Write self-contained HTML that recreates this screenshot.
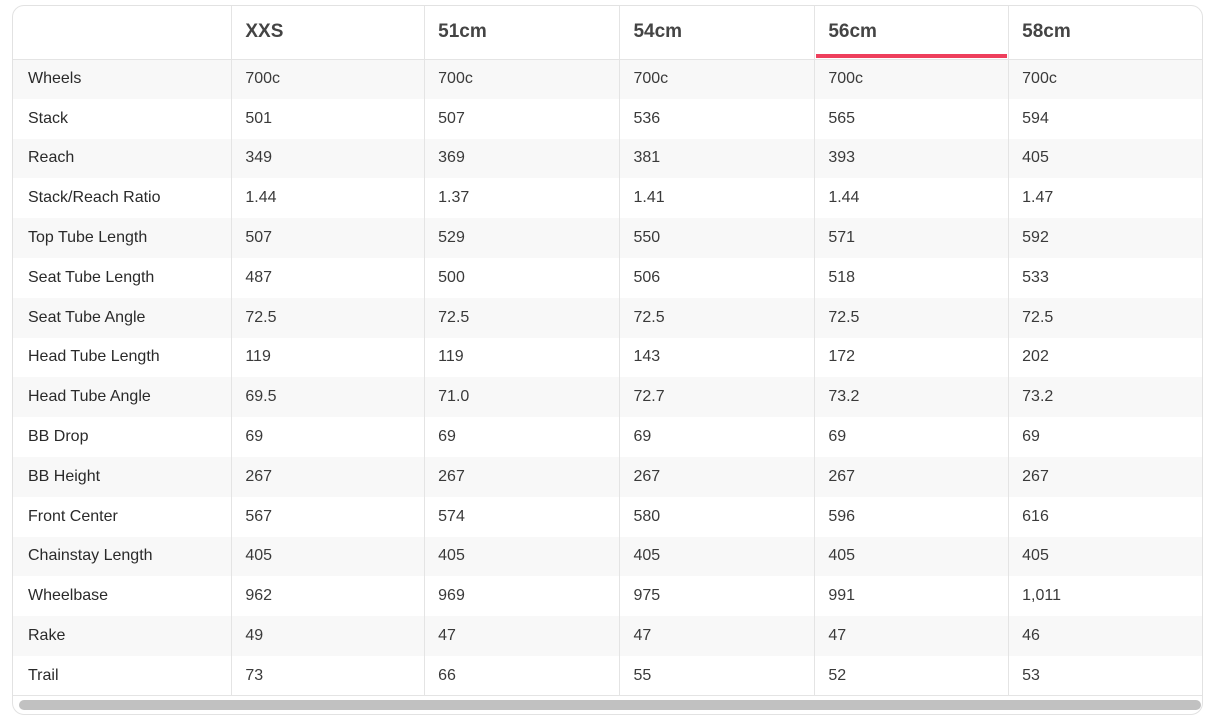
<!DOCTYPE html>
<html><head><meta charset="utf-8"><style>
html,body{margin:0;padding:0;background:#fff;width:1214px;height:725px;overflow:hidden}
.wrap{position:absolute;left:12px;top:5px;width:1191px;height:710px;border:1px solid #e2e2e2;border-radius:12px;overflow:hidden;box-sizing:border-box}
table{border-collapse:collapse;table-layout:fixed;font-family:"Liberation Sans",sans-serif;color:#3a3a3a;position:absolute;left:0;top:0}
td,th{border-right:1px solid #e4e4e4;height:39.8px;padding:0 0 0 13px;text-align:left;font-size:16px;font-weight:normal;box-sizing:border-box}
td:first-child{padding-left:15px;color:#2a2a2a}
th{height:53px;font-size:19px;font-weight:bold;color:#444;border-bottom:1px solid #e4e4e4;position:relative}
th.sel::after{content:"";position:absolute;left:1px;right:1px;bottom:1px;height:4px;background:#ee3f5c}
tr:nth-child(even) td{background:#f8f8f8}
tr:last-child td{border-bottom:1px solid #e4e4e4}
td:last-child,th:last-child{border-right:none}
.sb{position:absolute;left:6px;top:694px;width:1182px;height:10px;background:#c1c1c1;border-radius:5px}
</style></head><body><div class="wrap"><table>
<colgroup><col style="width:219px"><col style="width:193px"><col style="width:195.5px"><col style="width:195px"><col style="width:194px"><col style="width:193.5px"></colgroup>
<tr><th></th><th>XXS</th><th>51cm</th><th>54cm</th><th class="sel">56cm</th><th>58cm</th></tr>
<tr><td>Wheels</td><td>700c</td><td>700c</td><td>700c</td><td>700c</td><td>700c</td></tr>
<tr><td>Stack</td><td>501</td><td>507</td><td>536</td><td>565</td><td>594</td></tr>
<tr><td>Reach</td><td>349</td><td>369</td><td>381</td><td>393</td><td>405</td></tr>
<tr><td>Stack/Reach Ratio</td><td>1.44</td><td>1.37</td><td>1.41</td><td>1.44</td><td>1.47</td></tr>
<tr><td>Top Tube Length</td><td>507</td><td>529</td><td>550</td><td>571</td><td>592</td></tr>
<tr><td>Seat Tube Length</td><td>487</td><td>500</td><td>506</td><td>518</td><td>533</td></tr>
<tr><td>Seat Tube Angle</td><td>72.5</td><td>72.5</td><td>72.5</td><td>72.5</td><td>72.5</td></tr>
<tr><td>Head Tube Length</td><td>119</td><td>119</td><td>143</td><td>172</td><td>202</td></tr>
<tr><td>Head Tube Angle</td><td>69.5</td><td>71.0</td><td>72.7</td><td>73.2</td><td>73.2</td></tr>
<tr><td>BB Drop</td><td>69</td><td>69</td><td>69</td><td>69</td><td>69</td></tr>
<tr><td>BB Height</td><td>267</td><td>267</td><td>267</td><td>267</td><td>267</td></tr>
<tr><td>Front Center</td><td>567</td><td>574</td><td>580</td><td>596</td><td>616</td></tr>
<tr><td>Chainstay Length</td><td>405</td><td>405</td><td>405</td><td>405</td><td>405</td></tr>
<tr><td>Wheelbase</td><td>962</td><td>969</td><td>975</td><td>991</td><td>1,011</td></tr>
<tr><td>Rake</td><td>49</td><td>47</td><td>47</td><td>47</td><td>46</td></tr>
<tr><td>Trail</td><td>73</td><td>66</td><td>55</td><td>52</td><td>53</td></tr>
</table><div class="sb"></div></div></body></html>
